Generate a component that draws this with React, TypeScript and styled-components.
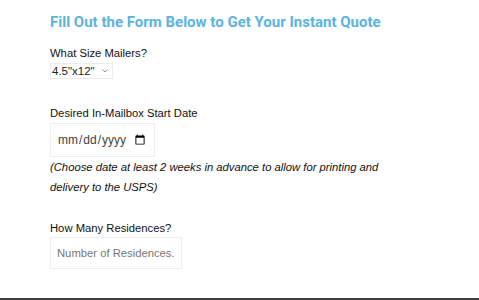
import React from "react";
import styled, { createGlobalStyle } from "styled-components";

const GlobalStyle = createGlobalStyle`
  html, body {
    margin: 0;
    padding: 0;
    background: #ffffff;
  }
  body {
    font-family: "Liberation Sans", Arial, Helvetica, sans-serif;
    color: #111;
  }
`;

const Page = styled.div`
  padding: 12px 0 0 50px;
`;

const Heading = styled.h2`
  margin: 0 0 13px;
  font-family: Roboto, "Liberation Sans", sans-serif;
  font-weight: 700;
  font-size: 15px;
  line-height: 20px;
  color: #5ab4df;
`;

const Field = styled.div<{ $gap?: number }>`
  display: flex;
  flex-direction: column;
  align-items: flex-start;
  margin-top: ${(p) => p.$gap ?? 0}px;
`;

const Label = styled.label`
  display: block;
  font-size: 11.25px;
  line-height: 16px;
  color: #111;
`;

const SelectWrap = styled.div`
  position: relative;
  display: inline-block;
  margin-top: 2px;
`;

const Select = styled.select`
  display: block;
  box-sizing: border-box;
  width: 63px;
  height: 16px;
  padding: 0 0 0 1px;
  appearance: none;
  -webkit-appearance: none;
  font-family: "Liberation Sans", Arial, sans-serif;
  font-size: 11.5px;
  line-height: 14px;
  color: #222;
  background: #fff;
  border: 1px solid #ececec;
  border-radius: 0;
  outline: none;
`;

const Chevron = styled.svg`
  position: absolute;
  right: 5px;
  top: 6px;
  width: 6px;
  height: 4px;
  pointer-events: none;
`;

const TextInput = styled.input<{ $w: number; $h: number; $top: number; $size: number }>`
  box-sizing: border-box;
  margin-top: ${(p) => p.$top}px;
  width: ${(p) => p.$w}px;
  height: ${(p) => p.$h}px;
  padding: 0 6px;
  font-family: "Liberation Sans", Arial, sans-serif;
  font-size: ${(p) => p.$size}px;
  color: #444;
  background: #fff;
  border: 1px solid #ededed;
  border-radius: 0;
  outline: none;

  &::placeholder {
    color: #777;
  }
`;

const Note = styled.p`
  margin: 0;
  max-width: 350px;
  font-size: 11.25px;
  line-height: 20px;
  font-style: italic;
  color: #111;
`;

const Footer = styled.footer`
  margin-top: 29px;
  height: 2px;
  background: #3f3f3f;
`;

export default function App() {
  return (
    <>
      <GlobalStyle />
      <Page>
        <Heading>Fill Out the Form Below to Get Your Instant Quote</Heading>
        <Field>
          <Label htmlFor="size">What Size Mailers?</Label>
          <SelectWrap>
            <Select id="size" defaultValue="4.5x12">
              <option value="4.5x12">4.5"x12"</option>
              <option value="6x9">6"x9"</option>
              <option value="6x11">6"x11"</option>
            </Select>
            <Chevron viewBox="0 0 6 4" fill="none">
              <path d="M0.5 0.5 L3 3 L5.5 0.5" stroke="#888" strokeWidth="0.9" />
            </Chevron>
          </SelectWrap>
        </Field>
        <Field $gap={26}>
          <Label htmlFor="start">Desired In-Mailbox Start Date</Label>
          <TextInput id="start" type="date" $w={105} $h={34} $top={2} $size={12} />
          <Note>
            (Choose date at least 2 weeks in advance to allow for printing and
            delivery to the USPS)
          </Note>
        </Field>
        <Field $gap={23}>
          <Label htmlFor="homes">How Many Residences?</Label>
          <TextInput
            id="homes"
            type="text"
            inputMode="numeric"
            placeholder="Number of Residences."
            $w={132}
            $h={32}
            $top={1}
            $size={11.25}
          />
        </Field>
      </Page>
      <Footer />
    </>
  );
}
